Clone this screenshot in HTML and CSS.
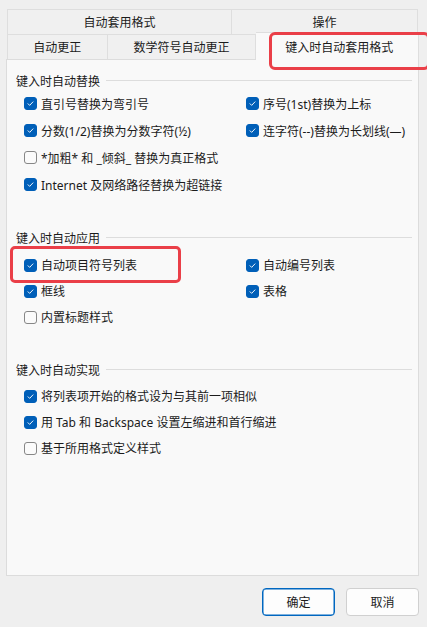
FILE: index.html
```html
<!DOCTYPE html>
<html lang="zh-CN">
<head>
<meta charset="utf-8">
<title>自动更正</title>
<link rel="stylesheet" href="styles.css">
</head>
<body>
<div class="window">
  <div class="tabs">
    <div class="tab-row">
      <div class="tab tab-a">自动套用格式</div>
      <div class="tab tab-b">操作</div>
    </div>
    <div class="tab-row">
      <div class="tab tab-c">自动更正</div>
      <div class="tab tab-d">数学符号自动更正</div>
      <div class="tab tab-sel hl-tab">键入时自动套用格式</div>
    </div>
  </div>
  <div class="panel">
    <section class="group g1">
      <div class="ghead"><span>键入时自动替换</span></div>
      <div class="grid">
        <label class="item"><span class="cb on"><svg viewBox="0 0 13 13"><path d="M3.6 6.8l1.9 1.9 3.9-4.1"/></svg></span>直引号替换为弯引号</label>
        <label class="item"><span class="cb on"><svg viewBox="0 0 13 13"><path d="M3.6 6.8l1.9 1.9 3.9-4.1"/></svg></span>序号(1st)替换为上标</label>
        <label class="item"><span class="cb on"><svg viewBox="0 0 13 13"><path d="M3.6 6.8l1.9 1.9 3.9-4.1"/></svg></span>分数(1/2)替换为分数字符(½)</label>
        <label class="item"><span class="cb on"><svg viewBox="0 0 13 13"><path d="M3.6 6.8l1.9 1.9 3.9-4.1"/></svg></span>连字符(--)替换为长划线(—)</label>
        <label class="item wide"><span class="cb"></span>*加粗* 和 _倾斜_ 替换为真正格式</label>
        <label class="item wide"><span class="cb on"><svg viewBox="0 0 13 13"><path d="M3.6 6.8l1.9 1.9 3.9-4.1"/></svg></span>Internet 及网络路径替换为超链接</label>
      </div>
    </section>
    <section class="group g2">
      <div class="ghead"><span>键入时自动应用</span></div>
      <div class="grid">
        <label class="item hl-item"><span class="cb on"><svg viewBox="0 0 13 13"><path d="M3.6 6.8l1.9 1.9 3.9-4.1"/></svg></span>自动项目符号列表</label>
        <label class="item"><span class="cb on"><svg viewBox="0 0 13 13"><path d="M3.6 6.8l1.9 1.9 3.9-4.1"/></svg></span>自动编号列表</label>
        <label class="item"><span class="cb on"><svg viewBox="0 0 13 13"><path d="M3.6 6.8l1.9 1.9 3.9-4.1"/></svg></span>框线</label>
        <label class="item"><span class="cb on"><svg viewBox="0 0 13 13"><path d="M3.6 6.8l1.9 1.9 3.9-4.1"/></svg></span>表格</label>
        <label class="item wide"><span class="cb"></span>内置标题样式</label>
      </div>
    </section>
    <section class="group g3">
      <div class="ghead"><span>键入时自动实现</span></div>
      <div class="grid">
        <label class="item wide"><span class="cb on"><svg viewBox="0 0 13 13"><path d="M3.6 6.8l1.9 1.9 3.9-4.1"/></svg></span>将列表项开始的格式设为与其前一项相似</label>
        <label class="item wide"><span class="cb on"><svg viewBox="0 0 13 13"><path d="M3.6 6.8l1.9 1.9 3.9-4.1"/></svg></span>用 Tab 和 Backspace 设置左缩进和首行缩进</label>
        <label class="item wide"><span class="cb"></span>基于所用格式定义样式</label>
      </div>
    </section>
  </div>
  <div class="footer">
    <button class="btn btn-primary">确定</button>
    <button class="btn">取消</button>
  </div>
</div>
</body>
</html>
```

FILE: styles.css
```css
* { box-sizing: border-box; }

html, body {
  margin: 0;
  padding: 0;
  background: #efefef;
}

body {
  font-family: "Segoe UI", "Noto Sans", "Noto Sans CJK SC", sans-serif;
  font-size: 12px;
  color: #1b1b1b;
  width: 427px;
  height: 627px;
  overflow: hidden;
}

.window {
  padding: 9px 8px 0 6px;
}

/* ---------- tabs ---------- */
.tabs {
  padding-left: 1px;
}

.tab-row {
  display: flex;
  height: 25px;
}

.tab {
  display: flex;
  align-items: center;
  justify-content: center;
  border: 1px solid #dedede;
  border-bottom: none;
  background: #f0f0f0;
  color: #1b1b1b;
  white-space: nowrap;
}

.tab-a { width: 224px; border-right: none; }
.tab-b { width: 187px; }
.tab-c { width: 100px; border-right: none; }
.tab-d { width: 150px; }
.tab-sel {
  position: relative;
  width: 163px;
  height: 28px;
  margin-top: -2px;
  margin-bottom: -1px;
  background: #f9f9f9;
  border-left: none;
  border-right: 1px solid #dedede;
  z-index: 2;
  padding-left: 4px;
  padding-top: 1px;
}

.hl-tab::after {
  content: "";
  position: absolute;
  left: 13px;
  top: -1px;
  width: 155px;
  height: 32px;
  border: 3px solid #ea3f48;
  border-radius: 6px;
}

/* ---------- panel ---------- */
.panel {
  position: relative;
  height: 517px;
  border: 1px solid #dcdcdc;
  background: #f9f9f9;
  padding-top: 12px;
}

.ghead {
  display: flex;
  align-items: center;
  height: 17px;
  padding-left: 9px;
  padding-right: 6px;
  color: #1b1b1b;
}

.ghead::after {
  content: "";
  flex: 1;
  height: 1px;
  background: #dddddd;
  margin-left: 6px;
}

.grid {
  display: grid;
  grid-template-columns: 222px 1fr;
  grid-auto-rows: 26px;
  padding-left: 17px;
}

.item {
  position: relative;
  display: flex;
  align-items: center;
  white-space: nowrap;
  color: #1b1b1b;
}

.item.wide { grid-column: 1 / span 2; }

.g1 .grid { grid-auto-rows: 27px; margin-top: 1px; }
.g2 { margin-top: 31px; }
.g2 .grid { margin-top: 6px; }
.g3 { margin-top: 31px; }
.g3 .grid { margin-top: 5px; }

.cb {
  flex: none;
  width: 13px;
  height: 13px;
  margin-right: 4px;
  border: 1px solid #878787;
  border-radius: 3px;
  background: #fbfbfb;
  display: flex;
}

.cb.on {
  background: #005fb8;
  border-color: #005fb8;
}

.cb svg {
  width: 11px;
  height: 11px;
}

.cb svg path {
  fill: none;
  stroke: #ffffff;
  stroke-width: 1.1;
  stroke-linecap: round;
  stroke-linejoin: round;
}

.hl-item::after {
  content: "";
  position: absolute;
  left: -14px;
  top: -6px;
  width: 165px;
  height: 31px;
  border: 3px solid #ea3f48;
  border-radius: 5px;
}

/* ---------- footer ---------- */
.footer {
  display: flex;
  justify-content: flex-end;
  gap: 11px;
  margin-top: 12px;
}

.btn {
  width: 73px;
  height: 28px;
  border: 1px solid #d0d0d0;
  border-radius: 4px;
  background: #fdfdfd;
  font-family: inherit;
  font-size: 12px;
  color: #1b1b1b;
  padding: 0;
}

.btn-primary {
  border: 1px solid #0067c0;
  box-shadow: inset 0 0 0 0.5px #0067c0;
}
```
